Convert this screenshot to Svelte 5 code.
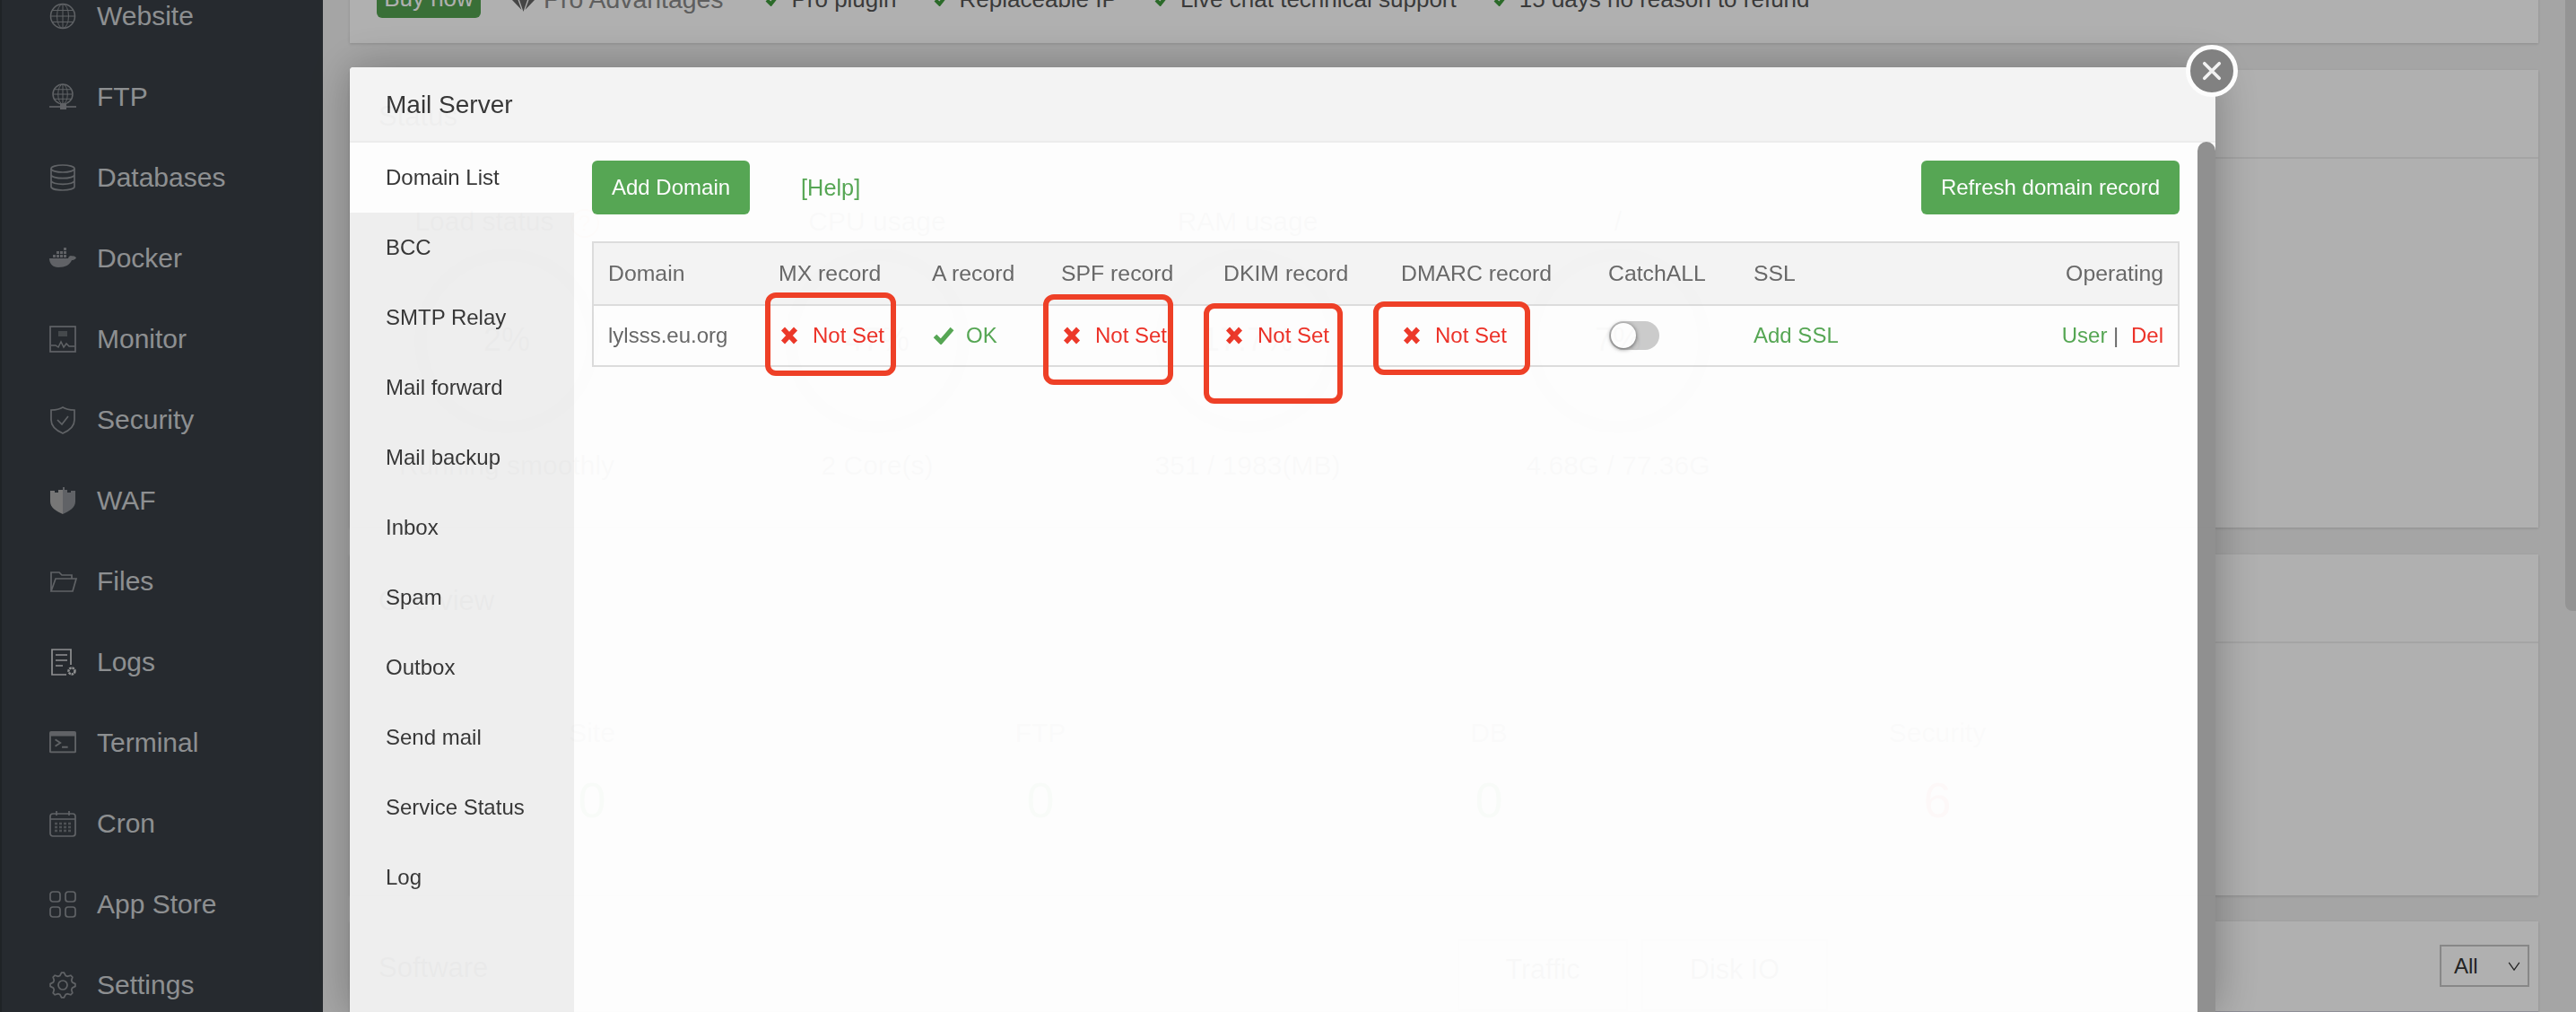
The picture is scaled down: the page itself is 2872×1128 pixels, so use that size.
<script>
  const gear = (() => {
    let d = '';
    const n = 8;
    for (let i = 0; i < n * 4; i++) {
      const a = (i / (n * 4)) * Math.PI * 2 - Math.PI / 2 - Math.PI / 16 * 0.5;
      const r = i % 4 < 2 ? 14 : 11;
      d += (i ? 'L' : 'M') + (15 + r * Math.cos(a)).toFixed(2) + ' ' + (15 + r * Math.sin(a)).toFixed(2);
    }
    return d + 'Z';
  })();
  const navItems = ['Domain List', 'BCC', 'SMTP Relay', 'Mail forward', 'Mail backup', 'Inbox', 'Spam', 'Outbox', 'Send mail', 'Service Status', 'Log'];
  const gauges = [
    { title: 'Load status', value: '2%', label: 'Running smoothly', help: true },
    { title: 'CPU usage', value: '47%', label: '2 Core(s)' },
    { title: 'RAM usage', value: '17.7%', label: '351 / 1983(MB)' },
    { title: '/', value: '7%', label: '4.68G / 77.36G' }
  ];
  const stats = [
    { name: 'Site', value: '0' },
    { name: 'FTP', value: '0' },
    { name: 'DB', value: '0' },
    { name: 'Security', value: '6', alert: true }
  ];
  const advantages = ['Pro plugin', 'Replaceable IP', 'Live chat technical support', '15 days no reason to refund'];
</script>

{#snippet cross()}
  <svg class="cross" viewBox="0 0 20 20"><path d="M3 2.500 17 17.500M17 2.500 3 17.500" /></svg>
{/snippet}

{#snippet globe(cy, r)}
  <circle cx="15" {cy} {r} class="thin2" />
  <ellipse cx="15" {cy} rx={r * 0.48} ry={r} class="thin" />
  <path class="thin" d="M15 {cy - r}V{cy + r}M{15 - r} {cy}H{15 + r}M{15 - r + 2} {cy - r * 0.48}H{15 + r - 2}M{15 - r + 2} {cy + r * 0.48}H{15 + r - 2}" />
{/snippet}

<div class="page">
  <aside class="side">
    <div class="item"><svg class="ic" viewBox="0 0 30 30">{@render globe(15, 13.5)}</svg>Website</div>
    <div class="item"><svg class="ic" viewBox="0 0 30 30">{@render globe(12, 11)}<path d="M0 26H30" /><rect class="solid" x="12" y="23" width="7" height="6" /></svg>FTP</div>
    <div class="item"><svg class="ic" viewBox="0 0 30 30"><ellipse cx="15" cy="5" rx="13" ry="4" /><path d="M2 5V25C2 27.500 8 29 15 29S28 27.500 28 25V5M2 11.700C2 14 8 15.700 15 15.700S28 14 28 11.700M2 18.300C2 20.700 8 22.300 15 22.300S28 20.700 28 18.300" /></svg>Databases</div>
    <div class="item"><svg class="ic" viewBox="0 0 30 30"><path class="solid" d="M0 15H21C22 12 24 11.500 25 12.500 27 12 29 13 30 14.500 28.500 16.500 26.500 17 25 17 23 22 18 25 10 25 4 25 0 21 0 15Z" /><path class="solid" d="M4 11h3v3H4zM8 11h3v3H8zM12 11h3v3h-3zM16 11h3v3h-3zM8 7h3v3H8zM12 7h3v3h-3zM16 7h3v3h-3zM16 3h3v3h-3z" /></svg>Docker</div>
    <div class="item"><svg class="ic" viewBox="0 0 30 30"><rect x="1" y="1" width="28" height="28" /><rect class="solid dim" x="10" y="6" width="10" height="6" /><path class="thin2" d="M2 22H7L10 24 13 18 16 24 19 20 22 23H28" /></svg>Monitor</div>
    <div class="item"><svg class="ic" viewBox="0 0 30 30"><path d="M15 1C19 3.500 24 4 28 4V15C28 22 22 27 15 30 8 27 2 22 2 15V4C6 4 11 3.500 15 1Z" /><path d="M9 15 14 20 21 11" /></svg>Security</div>
    <div class="item"><svg class="ic" viewBox="0 0 30 30"><path class="solid light" d="M1 4H6V6H10V3H15V30C8 27 1 23 1 16Z" /><path class="solid" d="M15 0H17V3H20V6H24V4H29V16C29 23 22 27 15 30Z" /></svg>WAF</div>
    <div class="item"><svg class="ic" viewBox="0 0 30 30"><path d="M2 26V5H11L14 8H25V12M2 26 7 12H30L26 26Z" /></svg>Files</div>
    <div class="item bright"><svg class="ic" viewBox="0 0 30 30"><path d="M24 18V1H3V29H19" /><path d="M7 7H20M7 13H20M7 19H15" /><circle cx="25" cy="25" r="3.500" class="cog" /></svg>Logs</div>
    <div class="item"><svg class="ic" viewBox="0 0 32 30"><rect class="solid" x="0" y="1" width="32" height="26" rx="2" /><rect class="hole" x="2" y="7" width="28" height="18" /><path class="prompt" d="M7 11 13 15 7 19M15 20H22" /></svg>Terminal</div>
    <div class="item"><svg class="ic" viewBox="0 0 30 30"><rect x="1" y="4" width="28" height="25" rx="3" /><path d="M1 10H29M8 1V6M22 1V6" /><path class="dots" d="M6 15H24M6 19H24M6 23H24" /></svg>Cron</div>
    <div class="item"><svg class="ic" viewBox="0 0 30 30"><rect x="1" y="1" width="11" height="11" rx="3" /><rect x="18" y="1" width="11" height="11" rx="3" /><rect x="1" y="18" width="11" height="11" rx="3" /><rect x="18" y="18" width="11" height="11" rx="3" /></svg>App Store</div>
    <div class="item"><svg class="ic" viewBox="0 0 30 30"><path d={gear} /><circle cx="15" cy="15" r="5" /></svg>Settings</div>
  </aside>

  <main class="main">
    <section class="card banner">
      <span class="buy">Buy now</span>
      <svg class="diamond" viewBox="0 0 25 13"><path d="M0 0H6.500L10.500 11ZM8 0H17L12.500 13ZM18.500 0H25L14.500 11Z" /></svg>
      <span class="pro">Pro Advantages</span>
      {#each advantages as text}
        <span class="adv"><svg class="tick" viewBox="0 0 16 14"><path d="M2 7 6.500 11.500 14 2" /></svg>{text}</span>
      {/each}
    </section>

    <section class="card status">
      <h2 class="card-head">Status</h2>
      <div class="gauges">
        {#each gauges as g}
          <div class="gauge">
            <div class="g-title">{g.title}{#if g.help}<span class="help">?</span>{/if}</div>
            <svg class="dial" viewBox="0 0 206 206">
              <circle cx="103" cy="103" r="96" />
              <text x="103" y="114">{g.value}</text>
            </svg>
            <div class="g-label">{g.label}</div>
          </div>
        {/each}
      </div>
    </section>

    <section class="card overview">
      <h2 class="card-head">Overview</h2>
      <div class="stats">
        {#each stats as s}
          <div class="stat">
            <div class="s-name">{s.name}</div>
            <div class="s-value" class:alert={s.alert}>{s.value}</div>
          </div>
        {/each}
      </div>
    </section>

    <section class="card software">
      <h2 class="soft-title">Software</h2>
      <div class="tabs">
        <span class="tab traffic">Traffic</span>
        <span class="tab disk">Disk IO</span>
      </div>
      <div class="select">All<svg viewBox="0 0 16 12"><path d="M1 1 8 11 15 1" /></svg></div>
    </section>
  </main>
  <div class="page-scroll"></div>
</div>

<div class="overlay"></div>

<div class="modal">
  <header class="m-head">Mail Server</header>
  <div class="m-body">
    <nav class="m-nav">
      {#each navItems as label, i}
        <div class="m-link" class:active={i === 0}>{label}</div>
      {/each}
    </nav>
    <div class="m-content">
      <div class="toolbar">
        <span class="btn">Add Domain</span>
        <span class="link help-link">[Help]</span>
        <span class="btn refresh">Refresh domain record</span>
      </div>
      <table>
        <colgroup>
          <col class="c1" /><col class="c2" /><col class="c3" /><col class="c4" /><col class="c5" /><col class="c6" /><col class="c7" /><col class="c8" /><col class="c9" />
        </colgroup>
        <thead>
          <tr>
            <th>Domain</th><th>MX record</th><th>A record</th><th>SPF record</th><th>DKIM record</th><th>DMARC record</th><th>CatchALL</th><th>SSL</th><th class="right">Operating</th>
          </tr>
        </thead>
        <tbody>
          <tr>
            <td>lylsss.eu.org</td>
            <td class="bad">{@render cross()}Not Set</td>
            <td class="good"><svg class="ok" viewBox="0 0 24 20"><path d="M2.500 10.500 9 17 21.500 2.500" /></svg>OK</td>
            <td class="bad">{@render cross()}Not Set</td>
            <td class="bad">{@render cross()}Not Set</td>
            <td class="bad">{@render cross()}Not Set</td>
            <td><span class="toggle"><span class="knob"></span></span></td>
            <td class="good">Add SSL</td>
            <td class="right"><span class="good">User</span> | <span class="del">Del</span></td>
          </tr>
        </tbody>
      </table>
    </div>
  </div>
  <div class="m-scroll"></div>
  <div class="close"><svg viewBox="0 0 24 24"><path d="M3 3 21 21M21 3 3 21" /></svg></div>
</div>

<div class="mark m1"></div>
<div class="mark m2"></div>
<div class="mark m3"></div>
<div class="mark m4"></div>

<style>
  :global(html), :global(body) { margin: 0; height: 100%; overflow: hidden; }
  :global(body) { font-family: "Liberation Sans", Arial, sans-serif; background: #f0f0f0; }

  .page { display: flex; height: 1128px; overflow: hidden; background: #f0f0f0; position: relative; }

  .side { width: 358px; flex: none; background: #383e44; border-left: 2px solid #2e3338; overflow: hidden; }
  .item { height: 90px; display: flex; align-items: center; gap: 23px; padding-left: 53px; font-size: 30px; color: #cdd0d3; }
  .item:first-child { margin-top: -27px; }
  .ic { width: 30px; height: 30px; flex: none; color: #8b8f94; fill: none; stroke: currentColor; stroke-width: 1.7; overflow: visible; }
  .bright .ic { color: #cfd1d3; }
  .thin { stroke-width: 1; }
  .thin2 { stroke-width: 1.5; }
  .solid { fill: currentColor; stroke: none; }
  .dim { opacity: .55; }
  .light { fill: #adadad; }
  .hole { fill: #383e44; stroke: none; }
  .prompt { stroke-width: 2; }
  .dots { stroke-width: 2.500; stroke-dasharray: 3 2; opacity: .7; }
  .cog { stroke-width: 2.500; stroke-dasharray: 2.500 .8; }

  .main { flex: 1; min-width: 0; padding: 0 42px 0 30px; margin-top: -52px; }
  .card { background: #fff; box-shadow: 0 1px 3px rgba(0, 0, 0, .15); }
  .card-head { margin: 0; height: 97px; line-height: 104px; padding-left: 32px; font-weight: 400; font-size: 31px; color: #444; border-bottom: 2px solid #eee; }

  .banner { height: 100px; display: flex; align-items: center; padding-left: 30px; gap: 41px; color: #555; font-size: 26px; margin-bottom: 30px; }
  .buy { width: 116px; height: 44px; line-height: 44px; text-align: center; flex: none; background: #53a150; color: #fff; border-radius: 6px; font-size: 26px; }
  .diamond { width: 25px; height: 13px; flex: none; margin: 17px -31px 0 -6px; fill: #666; }
  .pro { font-size: 28.4px; color: #888; margin-right: 6px; margin-top: 3px; }
  .adv { display: flex; align-items: center; white-space: nowrap; margin-top: 3px; }
  .tick { width: 16px; height: 14px; margin-right: 13px; fill: none; stroke: #3f9a3c; stroke-width: 4; }

  .status { height: 510px; margin-bottom: 30px; }
  .gauges { display: flex; gap: 63px; padding-top: 50px; }
  .gauge { width: 350px; text-align: center; color: #666; font-size: 30px; }
  .g-title, .g-label { line-height: 40px; height: 40px; }
  .help { display: inline-block; width: 28px; height: 28px; line-height: 28px; margin-left: 18px; font-size: 24px; color: #e8a070; border: 2px solid #e8a070; border-radius: 50%; }
  .dial { display: block; width: 206px; height: 206px; margin: 10px auto 16px; }
  .dial circle { fill: none; stroke: #ccc; stroke-width: 14; }
  .dial text { font-size: 36px; fill: #666; text-anchor: middle; }

  .overview { height: 380px; margin-bottom: 29px; }
  .stats { display: flex; padding: 80px 0 0 20px; text-align: center; }
  .stat { width: 500px; }
  .s-name { line-height: 40px; font-size: 30px; color: #777; }
  .s-value { line-height: 60px; margin-top: 25px; font-size: 56px; color: #3f9a3c; }
  .s-value.alert { color: #ef3b2d; }

  .software { height: 100px; display: flex; align-items: flex-start; border-bottom: 2px solid #cfcfdb; }
  .soft-title { flex: 0 0 1235px; padding-left: 32px; box-sizing: border-box; margin: 32px 0 0; font-size: 31px; line-height: 40px; font-weight: 400; color: #444; }
  .tabs { display: flex; gap: 15px; margin-top: 20px; }
  .tab { height: 80px; line-height: 62px; text-align: center; font-size: 30.5px; color: #444; border: 2px solid #ccc; box-sizing: border-box; }
  .traffic { width: 190px; }
  .disk { width: 208px; }
  .select { margin: 26px 10px 0 auto; width: 100px; height: 47px; box-sizing: border-box; border: 2px solid #c4c4c4; display: flex; align-items: center; justify-content: space-between; padding: 0 7px 0 14px; font-size: 24px; color: #333; }
  .select svg { width: 16px; height: 10px; fill: none; stroke: #333; stroke-width: 1.500; }

  .page-scroll { position: absolute; right: 0; top: 0; width: 12px; height: 681px; background: #d7d7d7; border-radius: 0 0 0 8px; }

  .overlay { position: fixed; inset: 0; background: rgba(0, 0, 0, .31); }

  .modal { position: fixed; left: 390px; top: 75px; width: 2080px; height: 1053px; background: #fff; opacity: .97; border-radius: 4px 4px 0 0; box-shadow: 1px 1px 50px rgba(0, 0, 0, .3); display: flex; flex-direction: column; }
  .m-head { height: 82px; line-height: 84px; flex: none; padding-left: 40px; background: #f5f5f5; border-bottom: 2px solid #eee; font-size: 28px; color: #333; border-radius: 4px 4px 0 0; }
  .m-body { flex: 1; display: flex; min-height: 0; }
  .m-nav { width: 250px; flex: none; background: #f0f0f0; }
  .m-link { height: 78px; line-height: 78px; padding-left: 40px; font-size: 24px; color: #333; }
  .m-link.active { background: #fff; }
  .m-content { flex: 1; padding: 20px 40px 0 20px; font-size: 24px; color: #666; }
  .toolbar { display: flex; align-items: center; height: 60px; margin-bottom: 30px; }
  .btn { height: 60px; line-height: 60px; padding: 0 22px; background: #53a651; color: #fff; border-radius: 6px; }
  .help-link { margin-left: 57px; color: #53a651; font-size: 25.3px; }
  .refresh { margin-left: auto; }

  table { width: 1770px; table-layout: fixed; border-spacing: 0; border: 2px solid #ddd; }
  .c1 { width: 190px; } .c2 { width: 171px; } .c3 { width: 144px; } .c4 { width: 181px; } .c5 { width: 198px; }
  .c6 { width: 231px; } .c7 { width: 162px; } .c8 { width: 250px; } .c9 { width: 239px; }
  th, td { padding: 0 16px; font-weight: 400; text-align: left; white-space: nowrap; }
  th { height: 68px; background: #f5f5f5; border-bottom: 2px solid #ddd; font-size: 24.8px; }
  td { height: 66px; }
  .right { text-align: right; }
  .bad, .del { color: #ee2e24; }
  .good { color: #53a651; }
  .del { margin-left: 7px; }
  .cross { width: 20px; height: 20px; margin: 0 16px 0 2px; vertical-align: -2px; fill: none; stroke: #ee3526; stroke-width: 5.500; }
  .ok { width: 24px; height: 20px; margin: 0 13px 0 1px; vertical-align: -2px; fill: none; stroke: #53a651; stroke-width: 5; }
  .toggle { display: block; position: relative; margin-left: 1px; width: 56px; height: 32px; border-radius: 16px; background: #ccc; }
  .knob { position: absolute; left: 2px; top: 2px; width: 28px; height: 28px; border-radius: 50%; background: #fff; box-shadow: 0 1px 5px rgba(0, 0, 0, .6); }

  .m-scroll { position: absolute; right: 0; top: 83px; bottom: 0; width: 20px; background: #8f8f8f; border-radius: 10px 10px 0 0; }
  .close { position: absolute; left: 2047px; top: -25px; width: 58px; height: 58px; box-sizing: border-box; border: 5px solid #fff; border-radius: 50%; background: #7f7f7f; display: flex; align-items: center; justify-content: center; }
  .close svg { width: 22px; height: 22px; fill: none; stroke: #f4f4f4; stroke-width: 4; stroke-linecap: round; }

  .mark { position: fixed; box-sizing: border-box; border: 6px solid #ee4027; border-radius: 12px; }
  .m1 { left: 853px; top: 326px; width: 146px; height: 93px; }
  .m2 { left: 1163px; top: 328px; width: 145px; height: 101px; }
  .m3 { left: 1342px; top: 338px; width: 155px; height: 112px; }
  .m4 { left: 1531px; top: 336px; width: 175px; height: 82px; }
</style>
